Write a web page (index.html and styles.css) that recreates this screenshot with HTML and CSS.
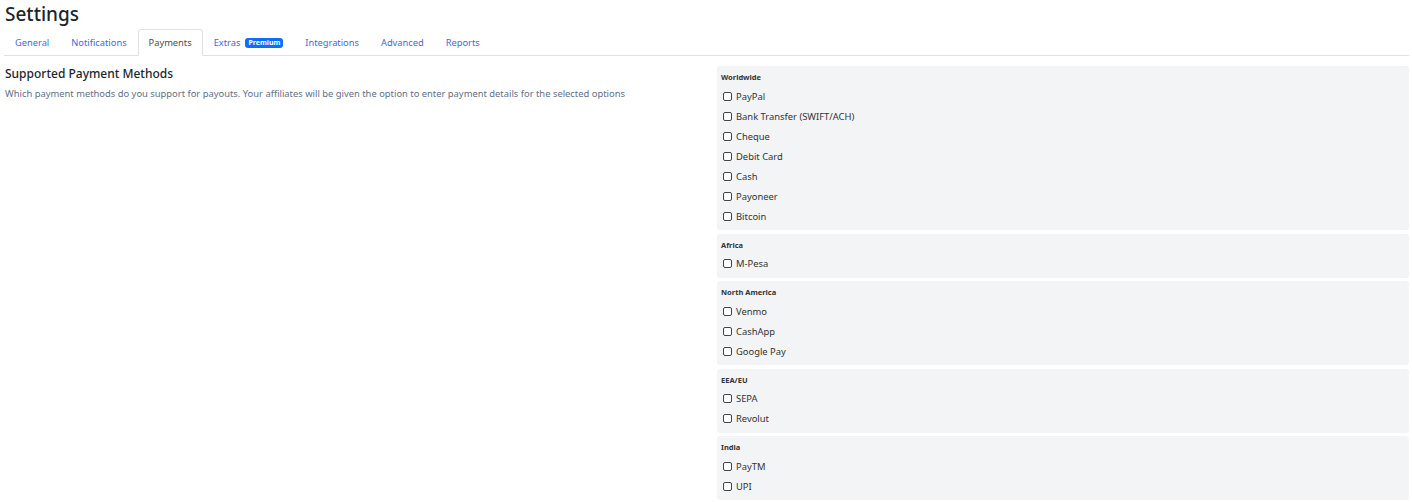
FILE: index.html
```html
<!DOCTYPE html>
<html>
<head>
<meta charset="utf-8">
<link rel="stylesheet" href="styles.css">
</head>
<body>
<div class="page">
  <h1 class="title">Settings</h1>
  <ul class="tabs">
    <li class="tab"><a>General</a></li>
    <li class="tab"><a>Notifications</a></li>
    <li class="tab active"><a>Payments</a></li>
    <li class="tab"><a>Extras <span class="badge">Premium</span></a></li>
    <li class="tab"><a>Integrations</a></li>
    <li class="tab"><a>Advanced</a></li>
    <li class="tab"><a>Reports</a></li>
  </ul>
  <div class="main">
    <div class="intro">
      <h2 class="heading">Supported Payment Methods</h2>
      <p class="desc">Which payment methods do you support for payouts. Your affiliates will be given the option to enter payment details for the selected options</p>
    </div>
    <div class="groups">
      <div class="group">
        <div class="group-title">Worldwide</div>
        <label class="item"><input type="checkbox" class="cb"><span>PayPal</span></label>
        <label class="item"><input type="checkbox" class="cb"><span>Bank Transfer (SWIFT/ACH)</span></label>
        <label class="item"><input type="checkbox" class="cb"><span>Cheque</span></label>
        <label class="item"><input type="checkbox" class="cb"><span>Debit Card</span></label>
        <label class="item"><input type="checkbox" class="cb"><span>Cash</span></label>
        <label class="item"><input type="checkbox" class="cb"><span>Payoneer</span></label>
        <label class="item"><input type="checkbox" class="cb"><span>Bitcoin</span></label>
      </div>
      <div class="group">
        <div class="group-title">Africa</div>
        <label class="item"><input type="checkbox" class="cb"><span>M-Pesa</span></label>
      </div>
      <div class="group">
        <div class="group-title">North America</div>
        <label class="item"><input type="checkbox" class="cb"><span>Venmo</span></label>
        <label class="item"><input type="checkbox" class="cb"><span>CashApp</span></label>
        <label class="item"><input type="checkbox" class="cb"><span>Google Pay</span></label>
      </div>
      <div class="group">
        <div class="group-title">EEA/EU</div>
        <label class="item"><input type="checkbox" class="cb"><span>SEPA</span></label>
        <label class="item"><input type="checkbox" class="cb"><span>Revolut</span></label>
      </div>
      <div class="group">
        <div class="group-title">India</div>
        <label class="item"><input type="checkbox" class="cb"><span>PayTM</span></label>
        <label class="item"><input type="checkbox" class="cb"><span>UPI</span></label>
      </div>
    </div>
  </div>
</div>
</body>
</html>
```

FILE: styles.css
```css
* { box-sizing: border-box; }
html, body { margin: 0; background: #fff; }
body {
  font-family: "Noto Sans", "Open Sans", sans-serif;
  color: #333;
}
.page { padding: 0 3px 0 4px; }
.title {
  margin: 0;
  height: 29px;
  line-height: 28px;
  font-size: 19px;
  font-weight: 500;
  color: #212529;
  padding-left: 1px;
}
.tabs {
  list-style: none;
  margin: 0;
  padding: 0;
  display: flex;
  border-bottom: 1px solid #dee2e6;
}
.tab {
  margin-bottom: -1px;
  border: 1px solid transparent;
  border-radius: 3px 3px 0 0;
  padding: 0 10px;
  line-height: 25px;
  font-size: 9.3px;
}
.tab a { color: #3f6ad8; display: flex; align-items: center; }
.tab.active { border-color: #dee2e6 #dee2e6 #fff; background: #fff; }
.tab.active a { color: #495057; }
.badge {
  display: inline-block;
  margin-left: 5px;
  background: #0d6efd;
  color: #fff;
  font-size: 7px;
  font-weight: 700;
  line-height: 10px;
  padding: 0 3px;
  border-radius: 3px;
}
.main {
  display: grid;
  grid-template-columns: 713px 1fr;
  margin-top: 10px;
}
.heading {
  margin: 0;
  font-size: 12px;
  line-height: 16px;
  font-weight: 500;
  color: #212529;
  padding-left: 1px;
}
.desc {
  margin: 5px 0 0;
  font-size: 9.4px;
  line-height: 14px;
  color: #5f6f86;
  padding-left: 1px;
}
.groups { display: flex; flex-direction: column; gap: 3.5px; }
.group {
  background: #f3f4f6;
  border-radius: 3px;
  padding: 5px 4px 4px;
}
.group-title {
  font-size: 7.5px;
  font-weight: 700;
  line-height: 12px;
  color: #333;
  margin-bottom: 3px;
}
.item {
  display: flex;
  align-items: center;
  height: 20px;
  gap: 4px;
  font-size: 9.4px;
  color: #333;
}
.cb {
  appearance: none;
  -webkit-appearance: none;
  margin: 0 0 0 2px;
  width: 9px;
  height: 9px;
  border: 1px solid #444;
  border-radius: 2px;
  background: #fff;
}
```
